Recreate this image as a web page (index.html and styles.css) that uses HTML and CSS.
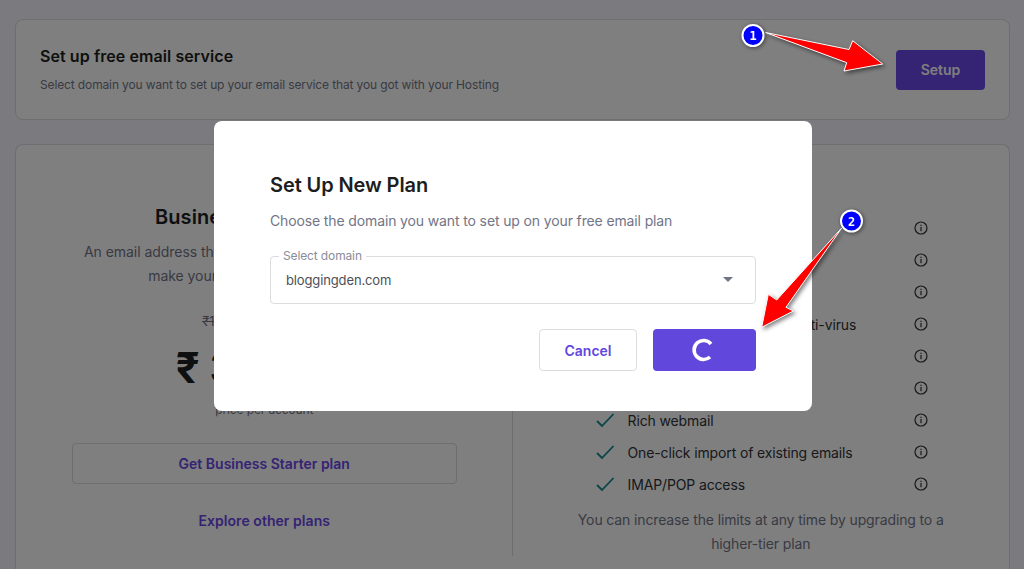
FILE: index.html
```html
<!DOCTYPE html>
<html lang="en">
<head>
    <meta charset="UTF-8">
    <meta name="viewport" content="width=device-width, initial-scale=1.0">
    <title>Set up free email service</title>
    <link rel="stylesheet" href="styles.css">
</head>
<body>
    <svg class="defs" width="0" height="0">
        <symbol id="check" viewBox="0 0 20 16">
            <path d="M2 9 L7 14 L18.500 2" fill="none" stroke-width="1.800"/>
        </symbol>
        <symbol id="info" viewBox="0 0 14 14">
            <circle cx="7" cy="7" r="6" fill="none" stroke="currentColor" stroke-width="1.200"/>
            <rect x="6.400" y="6" width="1.200" height="4.200" fill="currentColor"/>
            <rect x="6.400" y="3.800" width="1.200" height="1.200" fill="currentColor"/>
        </symbol>
    </svg>

    <div class="card setup-card">
        <div>
            <h2>Set up free email service</h2>
            <p class="muted">Select domain you want to set up your email service that you got with your Hosting</p>
        </div>
        <button class="btn-setup">Setup</button>
    </div>

    <div class="card plan-card">
        <div class="plan-col">
            <h3>Business Starter Email</h3>
            <p class="plan-desc">An email address that matches your domain names will<br>make your business stand out even</p>
            <p class="old-price">₹149.00/account/mo</p>
            <p class="price">₹ 3.99<span class="price-unit">/mo</span></p>
            <p class="per">price per account</p>
            <button class="btn-outline">Get Business Starter plan</button>
            <a class="explore" href="#">Explore other plans</a>
        </div>
        <div class="features-col">
            <ul class="features">
                <li><svg class="check"><use href="#check"/></svg><span></span><svg class="info"><use href="#info"/></svg></li>
                <li><svg class="check"><use href="#check"/></svg><span></span><svg class="info"><use href="#info"/></svg></li>
                <li><svg class="check"><use href="#check"/></svg><span></span><svg class="info"><use href="#info"/></svg></li>
                <li><svg class="check"><use href="#check"/></svg><span>Advanced anti-spam and anti-virus</span><svg class="info"><use href="#info"/></svg></li>
                <li><svg class="check"><use href="#check"/></svg><span></span><svg class="info"><use href="#info"/></svg></li>
                <li><svg class="check"><use href="#check"/></svg><span></span><svg class="info"><use href="#info"/></svg></li>
                <li><svg class="check"><use href="#check"/></svg><span>Rich webmail</span><svg class="info"><use href="#info"/></svg></li>
                <li><svg class="check"><use href="#check"/></svg><span>One-click import of existing emails</span><svg class="info"><use href="#info"/></svg></li>
                <li><svg class="check"><use href="#check"/></svg><span>IMAP/POP access</span><svg class="info"><use href="#info"/></svg></li>
            </ul>
            <p class="note">You can increase the limits at any time by upgrading to a higher-tier plan</p>
        </div>
    </div>

    <div class="overlay">
        <div class="modal">
            <h2 class="modal-title">Set Up New Plan</h2>
            <p class="modal-desc">Choose the domain you want to set up on your free email plan</p>
            <fieldset class="select">
                <legend>Select domain</legend>
                <span>bloggingden.com</span>
                <i class="caret"></i>
            </fieldset>
            <div class="modal-actions">
                <button class="btn-cancel">Cancel</button>
                <button class="btn-primary" aria-label="Loading">
                    <svg width="24" height="24" viewBox="0 0 24 24"><path d="M20 6 A9.500 9.500 0 1 0 19 19" fill="none" stroke="#fff" stroke-width="3.600"/></svg>
                </button>
            </div>
        </div>
    </div>

    <!-- annotations drawn on top of the screenshot -->
    <svg class="notes" width="1024" height="569" viewBox="0 0 1024 569">
        <polygon class="arrow" points="765.500,32.500 849,49.500 852.700,40.700 882.700,64 844,71 846.700,62.700"/>
        <polygon class="arrow" points="841.700,228 776.700,300 768.300,294.300 761.700,327.300 793.300,311 786,307.300"/>
        <circle class="pin" cx="753" cy="35.500" r="10.500"/>
        <text class="pin-num" x="753" y="40">1</text>
        <circle class="pin" cx="851.500" cy="221" r="10.500"/>
        <text class="pin-num" x="851.500" y="225.500">2</text>
    </svg>
</body>
</html>
```

FILE: styles.css
```css
* {
    box-sizing: border-box;
}
html, body {
    height: 569px;
    overflow: hidden;
}
body {
    margin: 0;
    padding: 19px 14px 0 15px;
    background-color: #f4f5ff;
    color: #1d1e20;
    font-family: Inter, "Noto Sans", sans-serif;
    font-size: 14px;
    letter-spacing: -0.13px;
}
h2, h3, p, ul {
    margin: 0;
    padding: 0;
}
button {
    font-family: inherit;
    cursor: pointer;
}
.defs {
    display: block;
    height: 0;
}
.card {
    background-color: #fff;
    border: 1px solid #dadce0;
    border-radius: 8px;
}
.setup-card {
    display: flex;
    align-items: center;
    justify-content: space-between;
    height: 101px;
    padding: 0 24px;
}
.setup-card h2 {
    font-size: 16px;
    font-weight: 600;
    line-height: 24px;
    letter-spacing: 0.08px;
}
.muted {
    margin-top: 7px;
    font-size: 12px;
    line-height: 20px;
    color: #727586;
}
.btn-setup {
    width: 89px;
    height: 40px;
    border: none;
    border-radius: 4px;
    background-color: #6a46e8;
    color: #fff;
    font-size: 14px;
    font-weight: 600;
}
.plan-card {
    display: grid;
    grid-template-columns: 1fr 1fr;
    margin-top: 24px;
    height: 425px;
    padding: 24px 24px 0;
    border-bottom: none;
    border-radius: 8px 8px 0 0;
}
.plan-col {
    display: flex;
    flex-direction: column;
    align-items: center;
    height: 387px;
    padding: 36px 23px 0 0;
    border-right: 1px solid #dadce0;
    text-align: center;
}
.plan-col h3 {
    font-size: 20px;
    font-weight: 600;
    line-height: 24px;
    letter-spacing: 0.1px;
}
.plan-desc {
    margin-top: 11px;
    line-height: 24px;
    letter-spacing: -0.05px;
    white-space: nowrap;
    color: #727586;
}
.old-price {
    margin-top: 23px;
    font-size: 13px;
    line-height: 20px;
    color: #727586;
    text-decoration: line-through;
}
.price {
    margin-top: 13px;
    font-size: 42px;
    font-weight: 700;
    line-height: 48px;
}
.price-unit {
    font-size: 26px;
    line-height: 1;
}
.per {
    margin-top: 8px;
    font-size: 12px;
    line-height: 20px;
    color: #727586;
}
.btn-outline {
    width: 385px;
    height: 41px;
    margin-top: 23px;
    border: 1px solid #dadce0;
    border-radius: 4px;
    background: none;
    color: #6a46e8;
    font-size: 14px;
    font-weight: 600;
}
.explore {
    margin-top: 27px;
    line-height: 20px;
    font-weight: 600;
    letter-spacing: 0.05px;
    color: #6a46e8;
    text-decoration: none;
}
.features-col {
    padding: 43px 0 0 24px;
}
.features {
    list-style: none;
    padding: 0 57px 0 58px;
}
.features li {
    display: flex;
    align-items: center;
    height: 32px;
    color: #2f3237;
}
.features span {
    flex: 1;
    margin-left: 13px;
}
.check {
    width: 20px;
    height: 16px;
    stroke: #0f8a92;
}
.info {
    width: 14px;
    height: 14px;
    color: #2f3237;
}
.note {
    margin-top: 8px;
    padding: 0 30px;
    line-height: 24px;
    text-align: center;
    color: #727586;
}
.overlay {
    position: fixed;
    inset: 0;
    padding: 121px 0 0 214px;
    background-color: rgba(0, 0, 0, 0.5);
}
.modal {
    width: 598px;
    height: 290px;
    padding: 52px 56px 0;
    border-radius: 8px;
    background-color: #fff;
}
.modal-title {
    font-size: 20px;
    font-weight: 600;
    line-height: 24px;
    letter-spacing: -0.1px;
    color: #1d1e20;
}
.modal-desc {
    margin-top: 12px;
    line-height: 24px;
    color: #727586;
}
.select {
    display: flex;
    align-items: center;
    justify-content: space-between;
    width: 486px;
    height: 56px;
    margin: 15px 0 0;
    padding: 0 22px 8px 15px;
    border: 1px solid #dadce0;
    border-radius: 4px;
    font-size: 13px;
    color: #4c4f57;
}
.select legend {
    padding: 0 4px;
    margin-left: -7px;
    font-size: 12px;
    line-height: 16px;
    color: #8a8d9a;
}
.caret {
    width: 0;
    height: 0;
    border-left: 5px solid transparent;
    border-right: 5px solid transparent;
    border-top: 5px solid #727586;
}
.modal-actions {
    display: flex;
    justify-content: flex-end;
    gap: 16px;
    margin-top: 25px;
}
.btn-cancel {
    width: 98px;
    height: 42px;
    border: 1px solid #dadce0;
    border-radius: 4px;
    background-color: #fff;
    color: #6147dc;
    font-size: 14px;
    font-weight: 600;
}
.btn-primary {
    display: flex;
    align-items: center;
    justify-content: center;
    width: 103px;
    height: 42px;
    padding: 0 4px 0 0;
    border: none;
    border-radius: 4px;
    background-color: #6147dc;
}
.notes {
    position: fixed;
    top: 0;
    left: 0;
}
.arrow {
    fill: #ff0000;
    stroke: #fff;
    stroke-width: 1;
    filter: drop-shadow(2px 2px 2px rgba(0, 0, 0, 0.5));
}
.pin {
    fill: #0000ff;
    stroke: #fff;
    stroke-width: 2;
    filter: drop-shadow(1px 1px 2px rgba(0, 0, 0, 0.5));
}
.pin-num {
    fill: #fff;
    font-family: "DejaVu Sans Mono", monospace;
    font-size: 12px;
    font-weight: 700;
    text-anchor: middle;
}
```
